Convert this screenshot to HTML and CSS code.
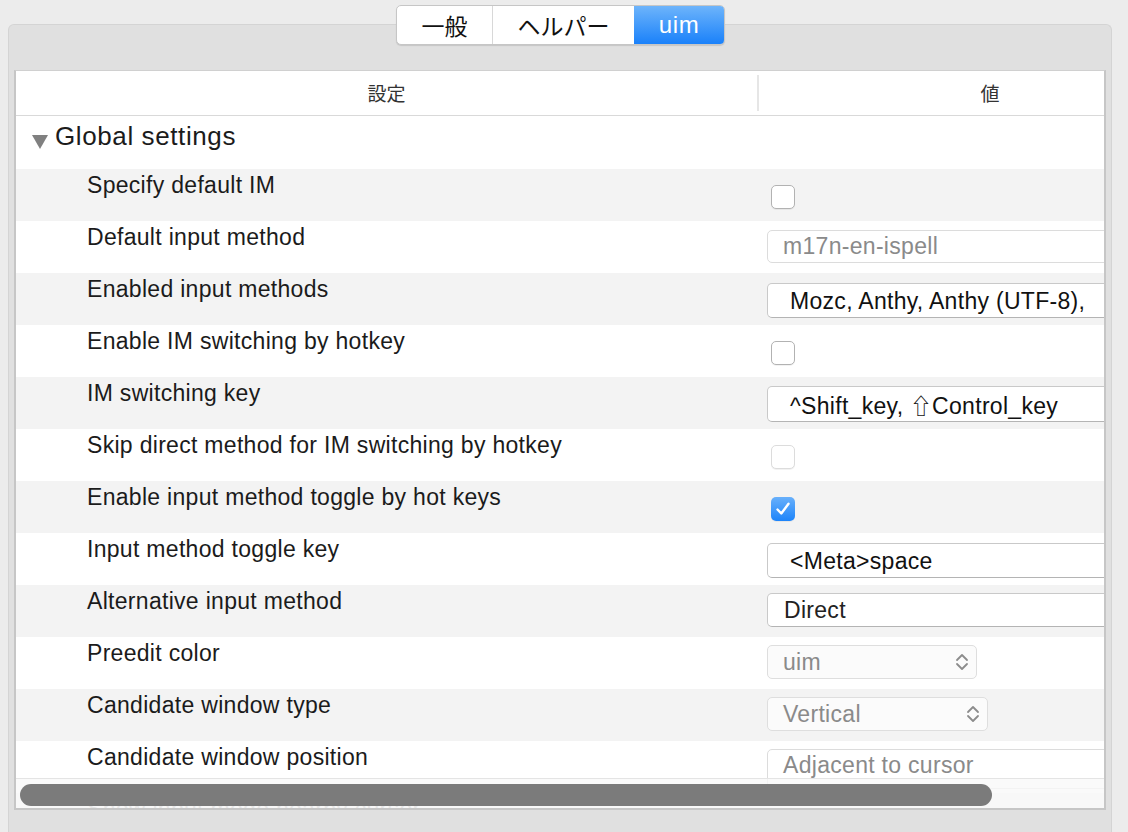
FILE: index.html
```html
<!DOCTYPE html>
<html lang="ja">
<head>
<meta charset="utf-8">
<link rel="stylesheet" href="styles.css">
</head>
<body>
<div class="window">
  <div class="segmented">
    <div class="seg seg-1">一般</div>
    <div class="seg seg-2">ヘルパー</div>
    <div class="seg seg-3 active">uim</div>
  </div>
  <div class="tabbox">
    <div class="table">
      <div class="table-inner">
        <div class="header">
          <div class="hcell hcell-1">設定</div>
          <div class="hcell hcell-2">値</div>
        </div>
        <div class="group-row">
          <span class="disclosure"></span>
          <span class="group-title">Global settings</span>
        </div>
        <div class="row alt">
          <div class="label">Specify default IM</div>
          <div class="value"><span class="checkbox"></span></div>
        </div>
        <div class="row">
          <div class="label">Default input method</div>
          <div class="value"><div class="field disabled-field">m17n-en-ispell</div></div>
        </div>
        <div class="row alt">
          <div class="label">Enabled input methods</div>
          <div class="value"><div class="button-field">Mozc, Anthy, Anthy (UTF-8),</div></div>
        </div>
        <div class="row">
          <div class="label">Enable IM switching by hotkey</div>
          <div class="value"><span class="checkbox"></span></div>
        </div>
        <div class="row alt">
          <div class="label">IM switching key</div>
          <div class="value"><div class="button-field tall">^Shift_key, <span class="shift">⇧</span>Control_key</div></div>
        </div>
        <div class="row">
          <div class="label">Skip direct method for IM switching by hotkey</div>
          <div class="value"><span class="checkbox disabled"></span></div>
        </div>
        <div class="row alt">
          <div class="label">Enable input method toggle by hot keys</div>
          <div class="value"><span class="checkbox checked"><svg viewBox="0 0 24 24" width="24" height="24"><path d="M6.5 12.5 L10.3 16.5 L17.5 6.8" fill="none" stroke="#fff" stroke-width="2.4" stroke-linecap="round" stroke-linejoin="round"/></svg></span></div>
        </div>
        <div class="row">
          <div class="label">Input method toggle key</div>
          <div class="value"><div class="button-field">&lt;Meta&gt;space</div></div>
        </div>
        <div class="row alt">
          <div class="label">Alternative input method</div>
          <div class="value"><div class="popup-wide">Direct</div></div>
        </div>
        <div class="row">
          <div class="label">Preedit color</div>
          <div class="value"><div class="popup popup-uim"><span>uim</span><svg class="stepper" viewBox="0 0 16 20" width="16" height="20"><path d="M3 8 L8 3 L13 8 M3 12 L8 17 L13 12" fill="none" stroke="#8c8c8c" stroke-width="1.8" stroke-linecap="round" stroke-linejoin="round"/></svg></div></div>
        </div>
        <div class="row alt">
          <div class="label">Candidate window type</div>
          <div class="value"><div class="popup popup-vertical"><span>Vertical</span><svg class="stepper" viewBox="0 0 16 20" width="16" height="20"><path d="M3 8 L8 3 L13 8 M3 12 L8 17 L13 12" fill="none" stroke="#8c8c8c" stroke-width="1.8" stroke-linecap="round" stroke-linejoin="round"/></svg></div></div>
        </div>
        <div class="row">
          <div class="label">Candidate window position</div>
          <div class="value"><div class="field disabled-field adj">Adjacent to cursor</div></div>
        </div>
        <div class="row alt">
          <div class="label disabled-label">Show input mode nearby cursor</div>
          <div class="value"><span class="checkbox disabled"></span></div>
        </div>
        <div class="hscroll">
          <div class="knob"></div>
        </div>
      </div>
    </div>
  </div>
</div>
</body>
</html>
```

FILE: styles.css
```css
* { box-sizing: border-box; }
html, body {
  margin: 0;
  padding: 0;
}
body {
  width: 1128px;
  height: 832px;
  overflow: hidden;
  background: #ececec;
  font-family: "Liberation Sans", "Noto Sans CJK JP", sans-serif;
  color: #1b1b1b;
}
.window {
  position: relative;
  padding: 24px 16px 0 8px;
  height: 832px;
}
.segmented {
  position: absolute;
  top: 5px;
  left: 396px;
  width: 329px;
  height: 40px;
  display: flex;
  background: #fff;
  border: 1px solid #c6c6c6;
  border-radius: 5px;
  box-shadow: 0 1px 1px rgba(0,0,0,0.12);
  overflow: hidden;
  z-index: 2;
}
.seg {
  display: flex;
  align-items: center;
  justify-content: center;
  font-size: 23px;
  color: #111;
  font-family: "Noto Sans CJK JP", "Liberation Sans", sans-serif;
}
.seg-1 { width: 96px; border-right: 1px solid #d8d8d8; }
.seg-2 { width: 141px; }
.seg-3 { flex: 1; }
.seg.active {
  background: linear-gradient(#6db4fb, #1a81fa);
  color: #fff;
  font-family: "Liberation Sans", sans-serif;
  font-size: 24px;
  letter-spacing: 0.6px;
}
.tabbox {
  height: 808px;
  background: #e0e0e0;
  border: 1px solid #d4d4d4;
  border-bottom: none;
  border-radius: 6px 6px 0 0;
  padding: 45px 6px 0 5px;
}
.table {
  width: 1092px;
  height: 740px;
  border: 2px solid #c6c6c6;
  border-top: 1px solid #d0d0d0;
  background: #fff;
}
.table-inner {
  position: relative;
  width: 100%;
  height: 100%;
  overflow: hidden;
}
.header {
  display: grid;
  grid-template-columns: 741px 466px;
  height: 45px;
  border-bottom: 1px solid #d9d9d9;
  width: 1207px;
}
.hcell {
  display: flex;
  align-items: center;
  justify-content: center;
  padding-bottom: 2px;
  font-size: 19px;
  color: #333;
  font-family: "Noto Sans CJK JP", sans-serif;
}
.hcell-2 {
  position: relative;
}
.hcell-2::before {
  content: "";
  position: absolute;
  left: 0;
  top: 4px;
  bottom: 4px;
  width: 2px;
  background: #e6e6e6;
}
.group-row {
  height: 53px;
  display: flex;
  align-items: flex-start;
  padding: 5px 0 0 16px;
}
.disclosure {
  width: 0;
  height: 0;
  border-left: 8px solid transparent;
  border-right: 8px solid transparent;
  border-top: 14px solid #808080;
  margin-top: 14px;
  margin-right: 7px;
}
.group-title {
  font-size: 26px;
  letter-spacing: 0.6px;
  line-height: 30px;
  color: #1b1b1b;
}
.row {
  display: grid;
  grid-template-columns: 741px 466px;
  height: 52px;
  width: 1207px;
  background: #fff;
}
.row.alt { background: #f3f3f3; }
.label {
  padding: 3px 0 0 71px;
  font-size: 23px;
  letter-spacing: 0.3px;
  line-height: 26px;
  color: #1b1b1b;
}
.disabled-label { color: #a0a0a0; }
.value {
  padding-left: 10px;
  position: relative;
}
.checkbox {
  display: block;
  margin-top: 16px;
  margin-left: 4px;
  width: 24px;
  height: 24px;
  border: 1px solid #b2b2b2;
  border-radius: 5px;
  background: #fff;
  box-shadow: 0 1px 0 rgba(0,0,0,0.05);
}
.checkbox.disabled { border-color: #dcdcdc; }
.checkbox.checked {
  border: none;
  background: linear-gradient(#68b0fb, #1d84fa);
}
.checkbox svg { display: block; }
.field {
  margin-top: 9px;
  height: 33px;
  border: 1px solid #dcdcdc;
  border-radius: 5px;
  background: #fff;
  padding-left: 15px;
  font-size: 23px;
  letter-spacing: 0.3px;
  line-height: 31px;
}
.field.adj { margin-top: 8px; height: 40px; }
.disabled-field { color: #8a8a8a; }
.button-field {
  margin-top: 10px;
  height: 35px;
  border: 1px solid #c9c9c9;
  border-bottom-color: #b4b4b4;
  border-radius: 5px;
  background: #fff;
  padding-left: 22px;
  font-size: 23px;
  letter-spacing: 0.3px;
  line-height: 35px;
  color: #111;
  white-space: nowrap;
}
.shift {
  font-family: "Noto Sans CJK JP", "DejaVu Sans", sans-serif;
  font-size: 22px;
  letter-spacing: 0;
  color: #111;
}
.button-field.tall { margin-top: 9px; height: 36px; }
.popup-wide {
  margin-top: 8px;
  height: 34px;
  border: 1px solid #c9c9c9;
  border-bottom-color: #b4b4b4;
  border-radius: 5px;
  background: #fff;
  padding-left: 16px;
  font-size: 23px;
  letter-spacing: 0.3px;
  line-height: 32px;
  color: #222;
}
.popup {
  margin-top: 8px;
  height: 34px;
  border: 1px solid #dedede;
  border-radius: 5px;
  background: #fbfbfb;
  padding: 0 6px 0 15px;
  font-size: 23px;
  letter-spacing: 0.3px;
  color: #8a8a8a;
  display: flex;
  align-items: center;
  justify-content: space-between;
}
.popup-uim { width: 210px; }
.popup-vertical { width: 221px; }
.stepper { display: block; }
.hscroll {
  position: absolute;
  left: 0;
  bottom: 0;
  width: 100%;
  height: 30px;
  border-top: 1px solid #e4e4e4;
  background: rgba(249,249,249,0.8);
}
.knob {
  position: absolute;
  left: 4px;
  top: 5px;
  width: 972px;
  height: 22px;
  border-radius: 11px;
  background: #7b7b7b;
}
```
